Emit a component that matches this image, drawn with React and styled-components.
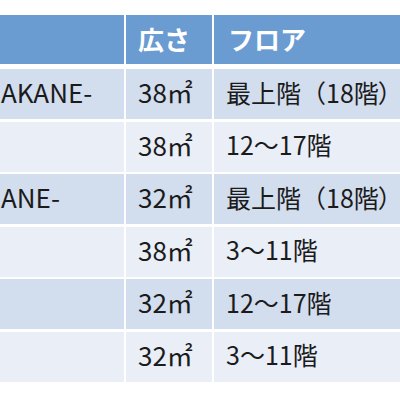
import React from "react";
import styled, { createGlobalStyle } from "styled-components";

const GlobalStyle = createGlobalStyle`
  html, body {
    margin: 0;
    padding: 0;
    background: #ffffff;
  }
  body {
    font-family: "Noto Sans CJK JP", "Noto Sans", sans-serif;
    color: #1b1b1b;
  }
`;

const Page = styled.div`
  width: 400px;
  height: 400px;
  overflow: hidden;
  padding-top: 15px;
  box-sizing: border-box;
`;

const Table = styled.div`
  display: flex;
  flex-direction: column;
  gap: 2.5px;
`;

const Row = styled.div`
  display: grid;
  grid-template-columns: 124px 86px 186px;
  column-gap: 2px;
  height: ${(p) => (p.$head ? "49px" : "50px")};
  margin-bottom: ${(p) => (p.$head ? "2.5px" : "0")};
`;

const Cell = styled.div`
  display: flex;
  align-items: center;
  box-sizing: border-box;
  padding: 0 0 5px ${(p) => p.$pad || 12}px;
  white-space: nowrap;
  overflow: hidden;
  font-size: ${(p) => p.$fs || 26}px;
  background: ${(p) => (p.$shade ? "#d2ddee" : "#e9eef7")};
`;

const HeadCell = styled(Cell)`
  background: #6a9bd1;
  color: #ffffff;
  font-weight: 700;
  padding-bottom: 2px;
`;

// closing bracket set proportionally so it doesn't run past the cell edge
const Close = styled.span`
  font-feature-settings: "palt";
`;

const rows = [
  { name: "AKANE-", size: "38㎡", floor: "最上階（18階", close: true },
  { name: "", size: "38㎡", floor: "12〜17階" },
  { name: "ANE-", size: "32㎡", floor: "最上階（18階", close: true },
  { name: "", size: "38㎡", floor: "3〜11階" },
  { name: "", size: "32㎡", floor: "12〜17階" },
  { name: "", size: "32㎡", floor: "3〜11階" },
];

export default function App() {
  return (
    <Page>
      <GlobalStyle />
      <Table>
        <Row $head>
          <HeadCell $pad={1} />
          <HeadCell>広さ</HeadCell>
          <HeadCell $pad={14}>フロア</HeadCell>
        </Row>
        {rows.map((r, i) => (
          <Row key={i}>
            <Cell $shade={i % 2 === 0} $pad={1}>
              {r.name}
            </Cell>
            <Cell $shade={i % 2 === 0}>{r.size}</Cell>
            <Cell $shade={i % 2 === 0} $pad={12} $fs={25}>
              {r.floor}
              {r.close && <Close>）</Close>}
            </Cell>
          </Row>
        ))}
      </Table>
    </Page>
  );
}
